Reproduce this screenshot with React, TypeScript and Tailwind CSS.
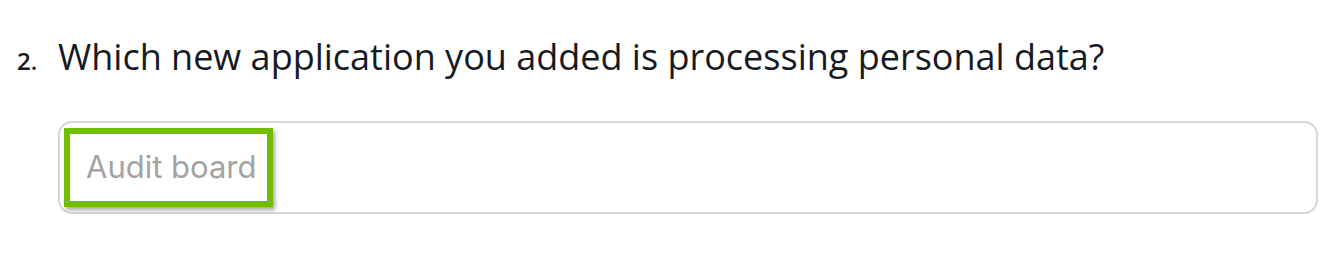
export default function App() {
  return (
    <div className="w-[1344px] h-[261px] bg-white pt-[27px]">
      <div className="flex items-baseline font-['Open_Sans',sans-serif] text-[#161a22]">
        <span className="w-[58px] pl-[17px] text-[24px] font-semibold">2.</span>
        <h2 className="text-[36px] leading-[60px]">Which new application you added is processing personal data?</h2>
      </div>
      <div className="ml-[58px] mt-[34px] w-[1260px] h-[93px] rounded-[14px] border-2 border-[#d4d7dc] pl-[4px] pt-[5px]">
        <div className="inline-flex h-[79px] w-[209px] items-center border-[6px] border-[#6fbe00] pl-[16px] shadow-[2px_3px_4px_rgba(0,0,0,0.35)]">
          <span className="font-['Inter',sans-serif] text-[31px] text-[#a3a3a3]">Audit board</span>
        </div>
      </div>
    </div>
  )
}
